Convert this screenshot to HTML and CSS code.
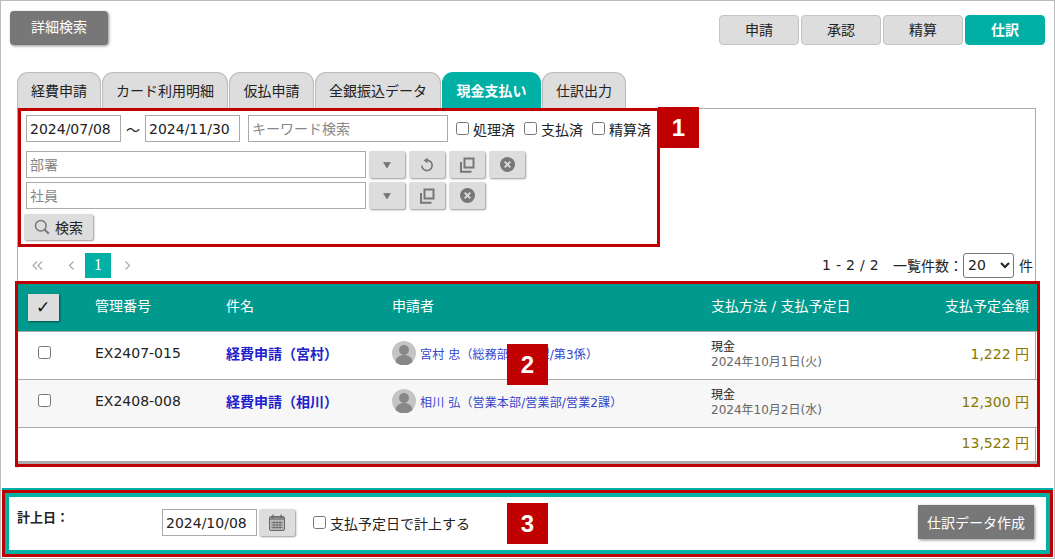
FILE: index.html
```html
<!DOCTYPE html>
<html lang="ja">
<head>
    <meta charset="UTF-8">
    <title>仕訳</title>
    <link rel="stylesheet" href="styles.css">
</head>
<body>
    <svg class="sprite" width="0" height="0">
        <symbol id="i-down" viewBox="0 0 12 12"><path d="M2 3h8L6 9.500z" fill="#777" stroke="#777" stroke-linejoin="round"/></symbol>
        <symbol id="i-reload" viewBox="0 0 16 16"><path d="M6 3.600a5.200 5.200 0 1 1-3.200 4.900" fill="none" stroke="#777" stroke-width="1.600"/><path d="M8.600 .8v5.400L4.600 3.500z" fill="#777"/></symbol>
        <symbol id="i-copy" viewBox="0 0 16 16"><path d="M5.500 1.500h9v9h-9z" fill="none" stroke="#777" stroke-width="2"/><path d="M1 5h2v8.800h9.500v2H1z" fill="#777"/></symbol>
        <symbol id="i-clear" viewBox="0 0 16 16"><circle cx="8" cy="8" r="8" fill="#777"/><path d="M5 5l6 6M11 5l-6 6" stroke="#ddd" stroke-width="2"/></symbol>
        <symbol id="i-user" viewBox="0 0 24 24"><circle cx="12" cy="12" r="12" fill="#c4c4c4"/><circle cx="12" cy="9" r="5" fill="#888"/><path d="M3.500 21c.5-5 4-7 8.500-7s8 2 8.500 7a12 12 0 0 1-17 0z" fill="#888"/></symbol>
    </svg>

    <div class="page">
        <div class="top-bar">
            <button class="btn-detail">詳細検索</button>
            <div class="modes">
                <a class="mode">申請</a>
                <a class="mode">承認</a>
                <a class="mode">精算</a>
                <a class="mode active">仕訳</a>
            </div>
        </div>

        <div class="tabs">
            <a class="tab w84">経費申請</a>
            <a class="tab w126">カード利用明細</a>
            <a class="tab w85">仮払申請</a>
            <a class="tab w126">全銀振込データ</a>
            <a class="tab w99 active">現金支払い</a>
            <a class="tab w84">仕訳出力</a>
        </div>

        <div class="panel">
            <form class="search">
                <div class="row row-first">
                    <input class="input date" type="text" value="2024/07/08">
                    <span class="tilde">〜</span>
                    <input class="input date" type="text" value="2024/11/30">
                    <input class="input keyword" type="text" placeholder="キーワード検索">
                    <label class="check"><input type="checkbox">処理済</label>
                    <label class="check"><input type="checkbox">支払済</label>
                    <label class="check"><input type="checkbox">精算済</label>
                </div>
                <div class="row row-dept">
                    <input class="input wide" type="text" placeholder="部署">
                    <button type="button" class="icon-btn"><svg width="10" height="10"><use href="#i-down"/></svg></button>
                    <button type="button" class="icon-btn"><svg width="16" height="16"><use href="#i-reload"/></svg></button>
                    <button type="button" class="icon-btn"><svg width="16" height="16"><use href="#i-copy"/></svg></button>
                    <button type="button" class="icon-btn"><svg width="15" height="15"><use href="#i-clear"/></svg></button>
                </div>
                <div class="row row-user">
                    <input class="input wide" type="text" placeholder="社員">
                    <button type="button" class="icon-btn"><svg width="10" height="10"><use href="#i-down"/></svg></button>
                    <button type="button" class="icon-btn"><svg width="16" height="16"><use href="#i-copy"/></svg></button>
                    <button type="button" class="icon-btn"><svg width="15" height="15"><use href="#i-clear"/></svg></button>
                </div>
                <button type="button" class="btn-search">
                    <svg width="16" height="16" viewBox="0 0 16 16"><circle cx="6.800" cy="6.800" r="5.300" fill="none" stroke="#777" stroke-width="1.500"/><path d="M10.800 10.800l4 4" stroke="#777" stroke-width="2"/></svg>
                    検索
                </button>
                <div class="mark mark-1">1</div>
            </form>

            <div class="list-head">
                <div class="pager">
                    <a class="pg first"><svg width="11" height="9" viewBox="0 0 11 9"><path d="M5 .5L1 4.500l4 4M10 .5L6 4.500l4 4" fill="none" stroke="#aaa" stroke-width="1.200"/></svg></a>
                    <a class="pg prev"><svg width="6" height="9" viewBox="0 0 6 9"><path d="M5.500 .5l-4 4 4 4" fill="none" stroke="#aaa" stroke-width="1.200"/></svg></a>
                    <a class="pg current">1</a>
                    <a class="pg next"><svg width="6" height="9" viewBox="0 0 6 9"><path d="M.5 .5l4 4-4 4" fill="none" stroke="#aaa" stroke-width="1.200"/></svg></a>
                </div>
                <div class="count">
                    <span class="range">1 - 2 / 2</span>
                    <span class="per-page">一覧件数：</span>
                    <select class="size"><option>20</option></select>
                    <span>件</span>
                </div>
            </div>

            <div class="table-wrap">
                <table class="list">
                    <colgroup>
                        <col class="c-check"><col class="c-no"><col class="c-name"><col class="c-user"><col class="c-pay"><col class="c-amount">
                    </colgroup>
                    <thead>
                        <tr>
                            <th class="cell-check"><span class="check-all">✓</span></th>
                            <th>管理番号</th>
                            <th>件名</th>
                            <th>申請者</th>
                            <th>支払方法 / 支払予定日</th>
                            <th class="num">支払予定金額</th>
                        </tr>
                    </thead>
                    <tbody>
                        <tr>
                            <td class="cell-check"><input type="checkbox"></td>
                            <td>EX2407-015</td>
                            <td><a class="title">経費申請（宮村）</a></td>
                            <td><span class="user"><svg width="24" height="24"><use href="#i-user"/></svg>宮村 忠（総務部/総務課/第3係）</span></td>
                            <td class="pay">現金<small>2024年10月1日(火)</small></td>
                            <td class="num money">1,222 円</td>
                        </tr>
                        <tr class="even">
                            <td class="cell-check"><input type="checkbox"></td>
                            <td>EX2408-008</td>
                            <td><a class="title">経費申請（相川）</a></td>
                            <td><span class="user"><svg width="24" height="24"><use href="#i-user"/></svg>相川 弘（営業本部/営業部/営業2課）</span></td>
                            <td class="pay">現金<small>2024年10月2日(水)</small></td>
                            <td class="num money">12,300 円</td>
                        </tr>
                    </tbody>
                    <tfoot>
                        <tr>
                            <td colspan="5"></td>
                            <td class="num money">13,522 円</td>
                        </tr>
                    </tfoot>
                </table>
                <div class="mark mark-2">2</div>
            </div>
        </div>

        <div class="footer">
            <div class="footer-in">
                <b class="footer-label">計上日：</b>
                <input class="input date" type="text" value="2024/10/08">
                <button type="button" class="icon-btn cal">
                    <svg width="16" height="17" viewBox="0 0 16 17"><rect x=".5" y="2.500" width="15" height="14" rx="1.500" fill="#bbb" stroke="#666"/><rect x="1" y="3" width="14" height="3" fill="#888"/><path d="M4 .5v4M12 .5v4" stroke="#666" stroke-width="1.200"/><path d="M2.500 8.500h11M2.500 11h11M2.500 13.500h11M5 7v8M8 7v8M11 7v8" stroke="#666" stroke-width=".8"/></svg>
                </button>
                <label class="check due"><input type="checkbox">支払予定日で計上する</label>
                <div class="mark mark-3">3</div>
                <button type="button" class="btn-create">仕訳データ作成</button>
            </div>
        </div>
    </div>
</body>
</html>
```

FILE: styles.css
```css
html, body {
    margin: 0;
    padding: 0;
    background: #ffffff;
}

body {
    color: #222222;
    font-family: "DejaVu Sans", "Noto Sans CJK JP", sans-serif;
    font-size: 14px;
}

.sprite {
    position: absolute;
}

.page {
    display: flex;
    flex-direction: column;
    box-sizing: border-box;
    width: 1055px;
    height: 559px;
    border: 1px solid #bbbbbb;
    overflow: hidden;
}

button, input, select {
    font-family: inherit;
    margin: 0;
}

/* top */
.top-bar {
    display: flex;
    justify-content: space-between;
    padding: 10px 9px 0;
}

.btn-detail {
    width: 98px;
    height: 34px;
    padding: 0 0 4px;
    border: none;
    border-radius: 4px;
    background: #777777;
    color: #ffffff;
    font-size: 14px;
    box-shadow: 1px 1px 3px rgba(0, 0, 0, .45);
}

.modes {
    display: flex;
    gap: 2px;
    margin-top: 4px;
}

.mode {
    box-sizing: border-box;
    width: 80px;
    height: 30px;
    border: 1px solid #c4c4c4;
    border-radius: 4px;
    background: #dddddd;
    font-size: 14px;
    line-height: 28px;
    text-align: center;
}

.mode.active {
    border-color: #00b0a4;
    background: #00b0a4;
    color: #ffffff;
    font-weight: bold;
}

/* tabs */
.tabs {
    display: flex;
    gap: 1px;
    margin: 27px 0 0 16px;
}

.tab {
    box-sizing: border-box;
    height: 36px;
    border: 1px solid #bbbbbb;
    border-bottom: none;
    border-radius: 11px 11px 0 0;
    background: #dddddd;
    font-size: 14px;
    line-height: 37px;
    text-align: center;
}

.tab.active {
    border-color: #00b0a4;
    background: #00b0a4;
    color: #ffffff;
    font-weight: bold;
}

.w84 { width: 84px; }
.w85 { width: 85px; }
.w99 { width: 99px; }
.w126 { width: 126px; }

/* search */
.panel {
    flex: none;
    height: 359px;
    margin: 0 18px 0 16px;
    border: 1px solid #aaaaaa;
    border-bottom: none;
}

.search {
    position: relative;
    box-sizing: border-box;
    width: 642px;
    height: 139px;
    margin-top: -1px;
    padding: 4px 5px 0;
    border: 3px solid #c00000;
}

.row {
    display: flex;
    align-items: center;
}

.row-dept {
    gap: 4px;
    margin-top: 9px;
}

.row-user {
    gap: 4px;
    margin-top: 4px;
}

.input {
    box-sizing: border-box;
    height: 27px;
    padding: 0 3px;
    border: 1px solid #aaaaaa;
    border-radius: 0;
    color: #222222;
    font-size: 14px;
}

.input::placeholder {
    color: #888888;
}

.date {
    width: 95px;
}

.tilde {
    width: 24px;
    text-align: center;
}

.keyword {
    width: 200px;
    margin-left: 8px;
}

.wide {
    width: 340px;
    margin-right: -1px;
}

.check {
    display: flex;
    align-items: center;
    font-size: 14px;
}

.row-first .check {
    margin-left: 9px;
}

.row-first .keyword + .check {
    margin-left: 8px;
}

.check input {
    width: 13px;
    height: 13px;
    margin: 0 4px 0 0;
}

.icon-btn {
    display: flex;
    align-items: center;
    justify-content: center;
    width: 36px;
    height: 27px;
    padding: 0;
    border: none;
    border-radius: 2px;
    background: #dddddd;
    box-shadow: 1px 1px 2px rgba(0, 0, 0, .4);
}

.btn-search {
    display: flex;
    align-items: center;
    gap: 5px;
    width: 69px;
    height: 26px;
    margin: 5px 0 0 -2px;
    padding: 0 0 0 10px;
    border: none;
    border-radius: 2px;
    background: #dddddd;
    color: #222222;
    font-size: 14px;
    box-shadow: 1px 1px 2px rgba(0, 0, 0, .4);
}

/* numbered marks laid over the screen */
.mark {
    position: absolute;
    width: 41px;
    height: 41px;
    background: #c00000;
    color: #ffffff;
    font-family: "Liberation Sans", sans-serif;
    font-size: 24px;
    font-weight: bold;
    line-height: 41px;
    text-align: center;
}

.mark-1 {
    top: -4px;
    left: 637px;
}

.mark-2 {
    top: 60px;
    left: 489px;
}

.mark-3 {
    top: 6px;
    left: 498px;
}

/* pager */
.list-head {
    display: flex;
    justify-content: space-between;
    align-items: center;
    height: 36px;
    margin-bottom: 1px;
    padding: 0 2px 0 0;
}

.pager {
    display: flex;
    align-items: center;
}

.pg {
    display: flex;
    align-items: center;
    justify-content: center;
    height: 25px;
}

.first {
    width: 39px;
}

.prev {
    width: 28px;
}

.current {
    width: 26px;
    background: #00b0a4;
    color: #ffffff;
    font-family: "Liberation Serif", serif;
    font-size: 16px;
}

.next {
    width: 34px;
}

.count {
    display: flex;
    align-items: center;
    font-size: 14px;
}

.range {
    margin-right: 14px;
    letter-spacing: .3px;
}

.size {
    width: 51px;
    height: 25px;
    margin-right: 5px;
    border: 1px solid #777777;
    border-radius: 3px;
    background: #ffffff;
    color: #222222;
    font-size: 14px;
}

/* list */
.table-wrap {
    position: relative;
    width: 1019px;
    outline: 3px solid #c00000;
}

.list {
    width: 1019px;
    border-collapse: collapse;
    table-layout: fixed;
}

.c-check { width: 60px; }
.c-no { width: 131px; }
.c-name { width: 166px; }
.c-user { width: 319px; }
.c-pay { width: 234px; }
.c-amount { width: 109px; }

.list th {
    box-sizing: border-box;
    height: 47px;
    padding: 0 0 4px 17px;
    background: #00998e;
    color: #ffffff;
    font-size: 14px;
    font-weight: normal;
    text-align: left;
    border-bottom: 1px solid #aaaaaa;
}

.list td {
    box-sizing: border-box;
    height: 48px;
    padding: 0 0 4px 17px;
    border-bottom: 1px solid #aaaaaa;
    font-size: 14px;
}

.list .cell-check {
    padding: 0;
    text-align: center;
}

.cell-check input {
    width: 13px;
    height: 13px;
    margin: 0 8px 6px 0;
}

.check-all {
    display: inline-block;
    width: 31px;
    height: 27px;
    margin: 0 10px 0 0;
    background: #dddddd;
    color: #111111;
    font-size: 17px;
    line-height: 27px;
    text-align: center;
    box-shadow: 1px 1px 2px rgba(0, 0, 0, .5);
}

.even td {
    background: #f7f7f7;
}

.title {
    color: #2222cc;
    font-size: 14px;
    font-weight: bold;
}

.user {
    display: flex;
    align-items: center;
    gap: 4px;
    color: #3344cc;
    font-size: 12px;
    letter-spacing: .15px;
    white-space: nowrap;
}

.list .pay {
    padding-bottom: 0;
    font-size: 12px;
    line-height: 15px;
}

.pay small {
    display: block;
    color: #666666;
    font-size: 12px;
}

.list .num {
    padding-left: 0;
    padding-right: 8px;
    text-align: right;
}

.list .money {
    color: #887700;
    font-size: 14px;
}

.list tfoot td {
    height: 35px;
    border-bottom: 3px solid #aaaaaa;
}

/* bottom bar */
.footer {
    margin: auto 1px 1px;
    border: 3px solid #c00000;
    box-shadow: 0 -2px 0 #00b0a4;
}

.footer-in {
    position: relative;
    display: flex;
    align-items: flex-start;
    box-sizing: border-box;
    height: 61px;
    padding: 12px 12px 0 8px;
    border: 4px solid #00b0a4;
    background: #ffffff;
}

.footer-label {
    width: 145px;
    margin-top: -2px;
    font-size: 13px;
}

.cal {
    margin-left: 2px;
}

.due {
    height: 27px;
    margin-left: 18px;
    font-size: 14px;
}

.btn-create {
    width: 116px;
    height: 34px;
    margin: -4px 0 0 auto;
    border: none;
    background: #777777;
    color: #ffffff;
    font-size: 14px;
    box-shadow: 1px 1px 3px rgba(0, 0, 0, .45);
}
```
